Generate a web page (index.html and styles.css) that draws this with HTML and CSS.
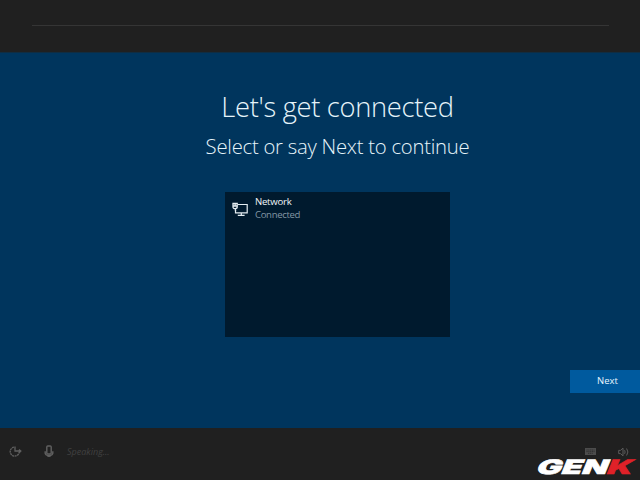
FILE: index.html
```
<!DOCTYPE html>
<html lang="en">
<head>
<meta charset="utf-8">
<title>Let's get connected</title>
<link rel="stylesheet" href="styles.css">
</head>
<body>
<div class="screen">
  <header class="top"><div class="rule"></div></header>
  <main class="main">
    <h1 class="title"><span>Let's get connected</span></h1>
    <h2 class="subtitle"><span>Select or say Next to continue</span></h2>
    <section class="networks">
      <div class="network">
        <svg class="net-icon" width="16" height="15" viewBox="0 0 16 15" fill="none" stroke="#e4edf2">
          <path d="M6 2.5H15.2V10.9H3.5V7.5M9.3 10.9V13.4M5.8 13.4H12.6" stroke-width="1.2"/>
          <path d="M1 1.5H5.2V5Q5.2 6.6 3.1 6.6Q1 6.6 1 5ZM1 4H5.2M3.1 1.5V4M3.5 6.5V9" stroke-width="1.3"/>
        </svg>
        <div class="net-text">
          <div class="name">Network</div>
          <div class="status">Connected</div>
        </div>
      </div>
    </section>
    <button class="next">Next</button>
  </main>
  <footer class="bar">
    <svg class="ease" width="13" height="13" viewBox="0 0 13 13" fill="none" stroke="#606060">
      <path d="M4.9 2.2A4.5 4.5 0 1 0 10 8" stroke-width="1.3" stroke-dasharray="2 .6"/>
      <path d="M6 1.5V6H11.8M10 4.6L11.8 6L9.6 8.2" stroke-width="1.3"/>
    </svg>
    <svg class="mic" width="10" height="13" viewBox="0 0 10 13" fill="none" stroke="#606060">
      <rect x="2.8" y="1" width="4.4" height="8" rx="1" stroke-width="1.4"/>
      <path d="M1.2 6.3V8.3Q1.6 10.3 5 10.5Q8.4 10.3 8.8 8.3V6.3M3.3 11.4H6.7" stroke-width="1.4"/>
    </svg>
    <span class="speaking">Speaking...</span>
    <svg class="keyboard" width="11" height="7" viewBox="0 0 11 7">
      <rect width="11" height="7" fill="#4c4c4c"/>
      <path d="M1.5 2H9.5M1.5 3.6H9.5M3 5.3H8" stroke="#292929" stroke-width=".8" stroke-dasharray="1.2 .6"/>
    </svg>
    <svg class="sound" width="11" height="10" viewBox="0 0 11 10" fill="none" stroke="#5c5c5c">
      <path d="M.7 3.4H2.5L5 1.1V8.9L2.5 6.6H.7Z" stroke-width="1"/>
      <path d="M6.6 3.2Q7.6 5 6.6 6.8M8.6 1.5Q11.2 5 8.6 8.5" stroke-width="1"/>
    </svg>
  </footer>
  <svg class="logo" width="120" height="32" viewBox="0 0 120 32">
    <g transform="translate(15 26) skewX(-22)">
      <text class="brand" x="0" y="0" textLength="71" lengthAdjust="spacingAndGlyphs">GEN</text>
      <text class="brand accent" x="70.500" y="0" textLength="25" lengthAdjust="spacingAndGlyphs">K</text>
    </g>
  </svg>
</div>
</body>
</html>
```
FILE: styles.css
```
* { box-sizing: border-box; }
body { margin: 0; background: #202020; font-family: "Open Sans", "Noto Sans", sans-serif; }
.screen { position: relative; width: 640px; height: 480px; overflow: hidden; display: flex; flex-direction: column; background: #202020; }
.top { height: 52px; padding: 25px 31px 0 32px; }
.rule { height: 1px; background: #353535; }
.main { height: 376px; padding-left: 35px; background: #00355d; border-top: 1px solid #102d42; display: flex; flex-direction: column; align-items: center; }
.title, .subtitle { margin: 0; font-weight: 300; color: #e6f4fa; white-space: nowrap; }
.title { margin-top: 34px; height: 40px; line-height: 40px; font-size: 27.3px; letter-spacing: -.3px; }
.subtitle { margin-top: 4px; height: 30px; line-height: 30px; font-size: 20.3px; letter-spacing: -.25px; }
.networks { width: 225px; height: 145px; margin-top: 31px; background: #001a2e; }
.network { display: flex; padding: 4px 0 0 7px; }
.net-icon { margin-top: 6px; }
.net-text { margin-left: 7px; font-size: 9.6px; line-height: 12px; letter-spacing: -.25px; }
.name { color: #f0f6f9; }
.status { color: #8296a3; padding-top: 1px; letter-spacing: -.35px; }
.next { align-self: flex-end; width: 70px; height: 23px; margin-top: 33px; padding: 0 0 2px 5px; border: 0; background: #005a9e; color: #e8f6ff; font: 9.5px "Open Sans", sans-serif; }
.bar { height: 52px; padding: 0 11px 5px 9px; display: flex; align-items: center; }
.mic { margin-left: 22px; }
.speaking { margin-left: 13px; font-size: 9px; font-style: italic; color: #414141; }
.keyboard { margin-left: auto; }
.sound { margin-left: 22px; }
.logo { position: absolute; left: 520px; top: 448px; }
.brand { font-family: Inter, "Liberation Sans", sans-serif; font-size: 20px; font-weight: 900; fill: #fff; stroke: #fff; stroke-width: .6px; }
.accent { fill: #e02128; stroke: #e02128; }
```
